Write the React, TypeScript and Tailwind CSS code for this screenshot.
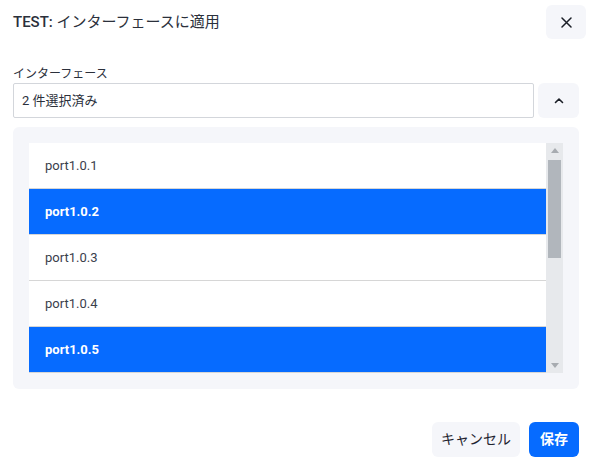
import React from "react";

const ports = [
  { name: "port1.0.1", sel: false },
  { name: "port1.0.2", sel: true },
  { name: "port1.0.3", sel: false },
  { name: "port1.0.4", sel: false },
  { name: "port1.0.5", sel: true },
];

export default function App() {
  return (
    <div
      className="w-[593px] h-[470px] bg-white flex flex-col"
      style={{ fontFamily: 'Roboto, "Noto Sans CJK JP", sans-serif' }}
    >
      <div className="flex items-center pl-[13px] pr-[7px] pt-[5px] h-[39px]">
        <div className="text-[15px] text-[#2b303b] leading-none">
          <span className="font-medium">TEST:</span> インターフェースに適用
        </div>
        <button className="ml-auto w-[40px] h-[34px] rounded-md bg-[#f5f6fa] flex items-center justify-center">
          <svg width="11" height="11" viewBox="0 0 11 11" fill="none" stroke="#1b1f27" strokeWidth="1.5" strokeLinecap="round">
            <path d="M1 1 L10 10 M10 1 L1 10" />
          </svg>
        </button>
      </div>

      <div className="px-[13px] pr-[14px] mt-[27px]">
        <div className="text-[12px] leading-[16px] text-[#2b303b] mb-[1px]">インターフェース</div>
        <div className="flex gap-[4px]">
          <div className="flex-1 h-[35px] border border-[#d3d6db] rounded-[2px] flex items-center pl-[8px] text-[13px] text-[#2b303b]">
            2 件選択済み
          </div>
          <button className="w-[41px] h-[35px] rounded-md bg-[#f5f6fa] flex items-center justify-center">
            <svg width="10" height="7" viewBox="0 0 10 7" fill="none" stroke="#1b1f27" strokeWidth="1.6" strokeLinecap="round" strokeLinejoin="round">
              <path d="M1.5 5.5 L5 2 L8.5 5.5" />
            </svg>
          </button>
        </div>

        <div className="mt-[9px] bg-[#f5f6fa] rounded-md p-[16px] flex">
          <div className="flex-1 bg-white">
            {ports.map((p) => (
              <div
                key={p.name}
                className={
                  p.sel
                    ? "h-[46px] border-b border-[#d6d6d6] bg-[#066bff] text-white font-bold flex items-center pl-[16px] text-[13px]"
                    : "h-[46px] border-b border-[#d6d6d6] bg-white text-[#3a404c] font-normal flex items-center pl-[16px] text-[13px]"
                }
              >
                {p.name}
              </div>
            ))}
          </div>
          <div className="w-[17px] bg-[#e7e9ec] flex flex-col items-center">
            <svg width="8" height="5" viewBox="0 0 8 5" className="mt-[5px]">
              <path d="M0 5 L4 0 L8 5 Z" fill="#a7abb0" />
            </svg>
            <div className="mt-[7px] w-[13px] h-[98px] bg-[#b1b6bc]" />
            <div className="flex-1" />
            <svg width="8" height="5" viewBox="0 0 8 5" className="mb-[5px]">
              <path d="M0 0 L4 5 L8 0 Z" fill="#a7abb0" />
            </svg>
          </div>
        </div>

        <div className="flex justify-end gap-[9px] mt-[33px]">
          <button className="w-[88px] h-[35px] rounded-md bg-[#f5f6fa] text-[14px] text-[#1f2430]">
            キャンセル
          </button>
          <button className="w-[50px] h-[35px] rounded-md bg-[#066bff] text-[14px] font-bold text-white">
            保存
          </button>
        </div>
      </div>
    </div>
  );
}
